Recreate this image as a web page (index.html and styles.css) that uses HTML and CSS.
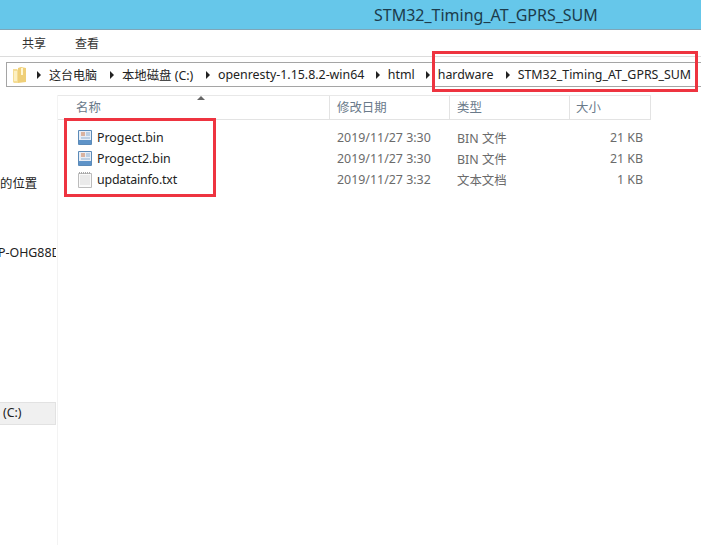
FILE: index.html
```html
<!DOCTYPE html>
<html lang="zh">
<head>
<meta charset="utf-8">
<title>STM32_Timing_AT_GPRS_SUM</title>
<link rel="stylesheet" href="styles.css">
</head>
<body>
<div class="window">
  <header class="titlebar"><span class="title">STM32_Timing_AT_GPRS_SUM</span></header>
  <nav class="ribbon"><span class="tab">共享</span><span class="tab">查看</span></nav>
  <div class="addressbar">
    <svg class="folder" width="15" height="18" viewBox="0 0 15 18"><path d="M1 3h4l1 1v13H2l-1-1z" fill="#f5dd95"/><path d="M6 2l3-1 5 1v14l-8 1z" fill="#efcf78"/><path d="M9 2h2v7H9z" fill="#fff6d2"/><path d="M2 5h3v10H2z" fill="#fdf0c2"/></svg>
    <span class="arrow"></span><span class="crumb c1">这台电脑</span>
    <span class="arrow"></span><span class="crumb c2">本地磁盘 (C:)</span>
    <span class="arrow"></span><span class="crumb c3">openresty-1.15.8.2-win64</span>
    <span class="arrow"></span><span class="crumb c4">html</span>
    <span class="arrow"></span><span class="crumb c5">hardware</span>
    <span class="arrow"></span><span class="crumb">STM32_Timing_AT_GPRS_SUM</span>
  </div>
  <div class="content">
    <aside class="sidebar">
      <div class="side-location">的位置</div>
      <div class="side-pc">P-OHG88D</div>
      <div class="side-drive">(C:)</div>
    </aside>
    <main class="files">
      <div class="row head">
        <span class="cell name"><span class="sort"></span>名称</span>
        <span class="cell date">修改日期</span>
        <span class="cell type">类型</span>
        <span class="cell size">大小</span>
      </div>
      <div class="row item">
        <span class="cell name"><svg class="icon" width="16" height="17" viewBox="0 0 16 17"><path d="M1.500 1.500h13v14h-13z" fill="#e8eef6" stroke="#5b8ab8"/><path d="M4 3h4v4H4z" fill="#d9b3a0"/><path d="M9 4h4M9 6h4M4 9h9" stroke="#8fb0d0"/><path d="M2 11h12v4H2z" fill="#5e93c8"/></svg><span class="fname">Progect.bin</span></span>
        <span class="cell date">2019/11/27 3:30</span><span class="cell type">BIN 文件</span><span class="cell size">21 KB</span>
      </div>
      <div class="row item">
        <span class="cell name"><svg class="icon" width="16" height="17" viewBox="0 0 16 17"><path d="M1.500 1.500h13v14h-13z" fill="#e8eef6" stroke="#5b8ab8"/><path d="M4 3h4v4H4z" fill="#d9b3a0"/><path d="M9 4h4M9 6h4M4 9h9" stroke="#8fb0d0"/><path d="M2 11h12v4H2z" fill="#5e93c8"/></svg><span class="fname">Progect2.bin</span></span>
        <span class="cell date">2019/11/27 3:30</span><span class="cell type">BIN 文件</span><span class="cell size">21 KB</span>
      </div>
      <div class="row item">
        <span class="cell name"><svg class="icon" width="16" height="17" viewBox="0 0 16 17"><path d="M1.500 2.500h13v14h-13z" fill="#fafafa" stroke="#bcbcbc"/><path d="M3 5h10M3 7h10M3 9h10M3 11h10M3 13h10" stroke="#dadada"/><path d="M2 1h1v2H2zM4 1h1v2H4zM6 1h1v2H6zM8 1h1v2H8zM10 1h1v2h-1zM12 1h1v2h-1z" fill="#a8a8a8"/></svg><span class="fname txt">updatainfo.txt</span></span>
        <span class="cell date">2019/11/27 3:32</span><span class="cell type">文本文档</span><span class="cell size">1 KB</span>
      </div>
    </main>
  </div>
  <div class="mark mark-path"></div>
  <div class="mark mark-files"></div>
</div>
</body>
</html>
```
FILE: styles.css
```css
* { box-sizing: border-box; }
html, body { margin: 0; height: 100%; background: #fff; }
body { font-family: "Noto Sans", "Noto Sans CJK SC", sans-serif; font-size: 12.4px; color: #1e1e1e; overflow: hidden; }
.window { position: relative; width: 701px; height: 545px; display: flex; flex-direction: column; overflow: hidden; }
.titlebar { height: 30px; background: #66c7ea; border-bottom: 1px solid #7fa6b8; padding-left: 374px; display: flex; align-items: center; flex: none; }
.title { font-size: 16px; color: #1c3c4c; }
.ribbon { height: 27px; flex: none; border-bottom: 1px solid #dcdcdc; display: flex; align-items: center; padding-left: 22px; gap: 29px; color: #333; font-size: 12px; }
.addressbar { margin: 5px 0 0 6px; height: 25px; flex: none; border: 1px solid #a5a5a5; border-right: 0; display: flex; align-items: center; padding-left: 5px; white-space: nowrap; color: #222; }
.folder { margin-right: 10px; flex: none; }
.arrow { width: 0; height: 0; border-left: 4px solid #222; border-top: 4px solid transparent; border-bottom: 4px solid transparent; margin-right: 8px; flex: none; }
.crumb { margin-right: 10px; }
.c1 { width: 51px; margin-right: 10px; font-size: 12px; }
.c2 { width: 75px; margin-right: 9px; }
.c3 { width: 148px; margin-right: 10px; }
.c4 { width: 27px; margin-right: 11px; }
.c5 { width: 58px; margin-right: 10px; }
.content { flex: 1; display: flex; margin-top: 8px; min-height: 0; }
.sidebar { width: 58px; flex: none; border-right: 1px solid #f3f3f3; position: relative; overflow: hidden; display: flex; flex-direction: column; color: #222; }
.side-location { height: 17px; margin-top: 79px; white-space: nowrap; }
.side-pc { height: 17px; margin-top: 53px; margin-left: -2px; width: 58px; overflow: hidden; white-space: nowrap; }
.side-drive { height: 23px; width: 56px; margin-top: 141px; background: #f0f0f0; border: 1px solid #e2e2e2; border-left: 0; padding-left: 3px; line-height: 20px; }
.files { flex: 1; min-width: 0; }
.row { display: flex; align-items: center; }
.head { height: 25px; color: #6a7a8a; margin-bottom: 7px; border-top: 1px solid #e8e8e8; border-bottom: 1px solid #e3e3e3; width: 593px; position: relative; }
.item { height: 21px; color: #6b6b6b; }
.cell { display: block; padding-left: 7px; }
.head .cell { border-right: 1px solid #e3e3e3; height: 100%; line-height: 23px; }
.name { width: 272px; display: flex; align-items: center; }
.head .name { padding-left: 18px; }
.item .name { padding-left: 19px; }
.date { width: 120px; }
.type { width: 120px; }
.size { width: 81px; text-align: right; padding-right: 8px; }
.head .size { text-align: left; padding-left: 6px; }
.icon { flex: none; margin-right: 4px; }
.fname { color: #222; }
.txt { letter-spacing: -0.2px; }
.sort { position: absolute; left: 139px; top: 0; width: 0; height: 0; border-left: 4px solid transparent; border-right: 4px solid transparent; border-bottom: 4px solid #666; }
.mark { position: absolute; border: 3px solid #ee3440; }
.mark-path { left: 432px; top: 51px; width: 266px; height: 41px; }
.mark-files { left: 64px; top: 118px; width: 152px; height: 79px; }
```
